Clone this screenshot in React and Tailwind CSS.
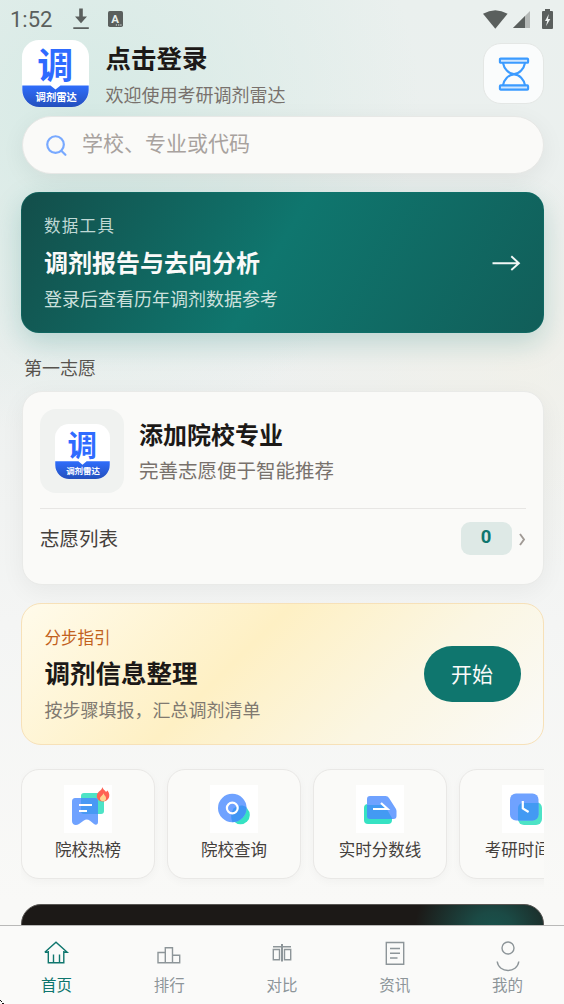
import React, { useState } from "react";

const tabs = [
  { key: "home", label: "首页", icon: HomeIcon },
  { key: "rank", label: "排行", icon: RankIcon },
  { key: "compare", label: "对比", icon: CompareIcon },
  { key: "news", label: "资讯", icon: NewsIcon },
  { key: "mine", label: "我的", icon: MineIcon },
];

const shortcuts = [
  { label: "院校热榜", icon: HotIcon },
  { label: "院校查询", icon: SearchSchoolIcon },
  { label: "实时分数线", icon: ScoreIcon },
  { label: "考研时间轴", icon: TimelineIcon },
];

const App = () => {
  const [activeTab, setActiveTab] = useState("home");
  const [keyword, setKeyword] = useState("");

  return (
    <div className="relative flex h-[1004px] w-[564px] flex-col overflow-hidden bg-[radial-gradient(ellipse_330px_330px_at_90px_110px,#d6eae5_0%,rgba(214,234,229,0)_100%),radial-gradient(ellipse_260px_200px_at_520px_370px,rgba(242,240,231,0.6)_0%,rgba(242,240,231,0)_100%),linear-gradient(180deg,#eaf0ee_0%,#edf0ef_35%,#f4f5f4_62%,#f9f9f7_90%)] font-['Noto_Sans_CJK_SC',sans-serif] text-[#1c1917]">
      <StatusBar />

      <main className="flex min-h-0 flex-1 flex-col overflow-hidden pr-[20px] pl-[21px]">
        <header className="flex h-[67px] shrink-0 items-center pl-px">
          <AppLogo className="size-[67px]" />
          <div className="ml-[16.5px] flex-1">
            <h1 className="text-[25.5px] leading-[36px] font-bold">点击登录</h1>
            <p className="mt-[6px] text-[18px] leading-[27px] text-[#78716c]">
              欢迎使用考研调剂雷达
            </p>
          </div>
          <button className="flex size-[61px] items-center justify-center rounded-[18px] border border-[#e4e7e5] bg-[#fafcfc]">
            <HourglassIcon />
          </button>
        </header>

        <label className="mt-[9px] ml-[0.5px] flex h-[58px] shrink-0 items-center rounded-full border border-[#e7e8e6] bg-[#fafaf8] pl-[23.5px] shadow-[0_6px_24px_rgba(28,25,23,0.06)]">
          <svg width="21" height="21" viewBox="0 0 22 22" fill="none" stroke="#78a9ff" strokeWidth="2.3">
            <circle cx="10" cy="10" r="8.7" />
            <path d="M16 16.5l4.3 4.2" strokeLinecap="round" />
          </svg>
          <input
            value={keyword}
            onChange={(e) => setKeyword(e.target.value)}
            placeholder="学校、专业或代码"
            className="ml-[15px] h-[52px] flex-1 bg-transparent pb-[6px] text-[21px] outline-none placeholder:text-[#a8a29e]"
          />
        </label>

        <section className="mt-[18px] flex h-[141px] shrink-0 items-center justify-between rounded-[18px] border border-[#0f766e]/40 bg-[linear-gradient(120deg,#134e4a_0%,#0f766e_48%,#115e59_100%)] bg-origin-border pr-[22px] pl-[22px] text-white shadow-[0_10px_28px_rgba(15,118,110,0.22)]">
          <div className="pb-px">
            <p className="text-[16.5px] leading-[25px] tracking-[1.3px] text-[#bfd8d5]">数据工具</p>
            <h2 className="mt-[6px] text-[24px] leading-[36px] font-bold text-[#fafaf9]">
              调剂报告与去向分析
            </h2>
            <p className="mt-[5px] text-[18px] leading-[27px] text-[#cce0dd]">登录后查看历年调剂数据参考</p>
          </div>
          <svg className="mt-px" width="29" height="16" viewBox="0 0 29 16" fill="none" stroke="#f1f7f6" strokeWidth="1.9">
            <path d="M0.5 8.3H27M19.3 1.3l7.6 7-7.6 6.7" />
          </svg>
        </section>

        <h3 className="mt-[20px] ml-[3px] shrink-0 text-[18px] leading-[28px] text-[#57534e]">
          第一志愿
        </h3>

        <section className="mt-[10px] ml-[0.5px] h-[194px] shrink-0 rounded-[20px] border border-[#e9eae8] bg-[#fafaf8] px-[17.5px] pt-[17px] shadow-[0_6px_24px_rgba(28,25,23,0.05)]">
          <div className="flex h-[100px] items-start border-b border-[#e7e6e4]">
            <div className="flex size-[84px] items-center justify-center rounded-[16px] bg-[#f0f2f0]">
              <AppLogo className="size-[55px]" />
            </div>
            <div className="ml-[15px] pt-[7px]">
              <h2 className="text-[24px] leading-[36px] font-bold">添加院校专业</h2>
              <p className="mt-[3px] text-[19.5px] leading-[29px] text-[#78716c]">
                完善志愿便于智能推荐
              </p>
            </div>
          </div>
          <div className="flex h-[58px] items-center">
            <span className="flex-1 pb-px text-[19.5px] leading-[29px] text-[#44403c]">志愿列表</span>
            <span className="flex h-[33px] w-[51px] items-center justify-center rounded-[9px] bg-[#dee9e6] font-['Roboto',sans-serif] text-[18.5px] font-bold text-[#0f766e]">
              0
            </span>
            <svg className="mt-[2px] ml-[7px]" width="7" height="13" viewBox="0 0 7 13" fill="none" stroke="#a09a95" strokeWidth="1.9">
              <path d="M1 1l4 5.5L1 12" />
            </svg>
          </div>
        </section>

        <section className="mt-[18px] flex h-[142px] shrink-0 items-center justify-between rounded-[20px] border border-[#f7e1b8] bg-[linear-gradient(135deg,#fffbeb_0%,#fef0c4_41%,#fbf6e2_70%,#fafaf8_100%)] bg-origin-border px-[22.5px]">
          <div className="pb-px">
            <p className="text-[16.5px] leading-[25px] text-[#c2611c]">分步指引</p>
            <h2 className="mt-[3px] text-[25.5px] leading-[37px] font-bold">调剂信息整理</h2>
            <p className="mt-[6px] text-[18px] leading-[27px] text-[#807970]">
              按步骤填报，汇总调剂清单
            </p>
          </div>
          <button className="h-[56px] w-[97px] rounded-full bg-[#0f766e] pb-[2px] text-[21px] leading-[54px] text-[#fafaf9]">
            开始
          </button>
        </section>

        <div className="mt-[24px] flex h-[110px] shrink-0 gap-[12px] overflow-x-clip">
          {shortcuts.map(({ label, icon: Icon }) => (
            <button
              key={label}
              className="flex w-[134px] shrink-0 flex-col items-center rounded-[18px] border border-[#e9e8e6] bg-[#fafaf8] pt-[15px] shadow-[0_3px_10px_rgba(28,25,23,0.03)]"
            >
              <span className="block size-[48px] bg-white">
                <Icon />
              </span>
              <span className="mt-[4px] text-[16.5px] leading-[25px] text-[#44403c]">{label}</span>
            </button>
          ))}
        </div>

        <section className="mt-[25px] h-[120px] shrink-0 rounded-[20px] border border-[#585653] bg-[#1c1917] bg-[radial-gradient(ellipse_78px_60px_at_471px_22px,#19514b_0%,#1b4a45_25%,rgba(28,25,23,0)_100%)]" />
      </main>

      <nav className="flex h-[79px] shrink-0 border-t border-[#b9b9b8] bg-[#fafaf9]">
        {tabs.map(({ key, label, icon: Icon }) => (
          <button
            key={key}
            onClick={() => setActiveTab(key)}
            className={`flex flex-1 flex-col items-center pt-[8px] ${
              activeTab === key ? "text-[#0f766e]" : "text-[#8d9599]"
            }`}
          >
            <Icon />
            <span className="text-[15.5px] leading-[24px]">{label}</span>
          </button>
        ))}
      </nav>

      <svg className="absolute bottom-0 left-0" width="4" height="4" viewBox="0 0 4 4" fill="#111">
        <path d="M0 0h1v1H0zM1 1h1v1H1zM2 3h2v1H2z" />
      </svg>
    </div>
  );
};

const StatusBar = () => (
  <div className="flex h-[40px] shrink-0 items-center pb-[2px] text-[#5a5f5d]">
    <span className="ml-[10px] w-[63px] pt-[2px] font-['Roboto',sans-serif] text-[22px] leading-[38px]">1:52</span>
    <svg width="17" height="22" viewBox="0 0 17 22" fill="currentColor">
      <path d="M6.2 .5h3.6v8h4.2L8 15.2 2 8.500h4.200zM.3 19.200h15.500V21H.3z" />
    </svg>
    <svg className="ml-[18px]" width="15" height="16" viewBox="0 0 15 16">
      <rect width="15" height="16" rx="1.8" fill="currentColor" />
      <text x="7" y="11.8" textAnchor="middle" fontSize="11.5" fontWeight="700" fontFamily="Roboto, sans-serif" fill="#e8f0ed">A</text>
      <path d="M7.8 13.6h1.2v1H7.8zM10.1 13.6h1.2v1h-1.2zM12.3 13.6h1.2v1h-1.2z" fill="#e8f0ed" />
    </svg>
    <div className="ml-auto flex items-center pr-[11px]">
      <svg width="25" height="19" viewBox="0 0 25 19" fill="currentColor">
        <path d="M0 3.8Q12.3-3.3 24.6 3.8L12.3 18.8z" />
      </svg>
      <svg className="ml-[4px]" width="19" height="18" viewBox="0 0 19 18">
        <path d="M18 1v17H1z" fill="#b4b8b6" />
        <path d="M13 6v12H1z" fill="currentColor" />
      </svg>
      <svg className="ml-[11px]" width="11" height="20" viewBox="0 0 11 20">
        <path d="M3 0h5v2h2a1 1 0 0 1 1 1v16a1 1 0 0 1-1 1H1a1 1 0 0 1-1-1V3a1 1 0 0 1 1-1h2z" fill="currentColor" />
        <path d="M6.8 5L3 12h2.2L4 17.3 8.3 10H6z" fill="#edf1ef" />
      </svg>
    </div>
  </div>
);

const AppLogo = ({ className }) => (
  <svg className={`shrink-0 overflow-visible ${className}`} viewBox="0 0 67 67">
    <defs>
      <linearGradient id="logoBlue" x1="0" y1="0" x2="0" y2="1">
        <stop offset="0" stopColor="#2f6dfb" />
        <stop offset="1" stopColor="#2450bd" />
      </linearGradient>
    </defs>
    <rect width="67" height="67" rx="17" fill="#fff" />
    <path d="M0.3 45.5h28.2l5 4 5-4h28.2V50a17 17 0 0 1-17 17H17.3a17 17 0 0 1-17-17z" fill="url(#logoBlue)" />
    <text x="33.2" y="38.7" textAnchor="middle" fontSize="36" fontWeight="700" fill="#2f6bff">
      调
    </text>
    <text x="34.2" y="61.3" textAnchor="middle" fontSize="10.3" fontWeight="700" fill="#fff">
      调剂雷达
    </text>
  </svg>
);

function HourglassIcon() {
  return (
    <svg width="32" height="34" viewBox="0 0 32 34" fill="none" stroke="#3b9bff" strokeWidth="2.1">
      <rect x="1.9" y="1.6" width="28.2" height="4.2" rx="0.8" fill="#cfe6ff" />
      <rect x="1.9" y="28.4" width="28.2" height="4.2" rx="0.8" fill="#cfe6ff" />
      <path d="M5 6c1 5.5 5.5 11 11 11S26 11.5 27 6M5 28.2c1-5.5 5.5-10.8 11-10.8s10 5.3 11 10.8" />
    </svg>
  );
}

function HotIcon() {
  return (
    <svg width="48" height="48" viewBox="0 0 48 48">
      <rect x="17" y="8" width="23" height="21" rx="3" fill="#4de3c6" />
      <path d="M11.5 13H31a3 3 0 0 1 3 3v21c0 2.5-2 3.500-4 2l-4-3.300c-2.500-1.600-4-1.600-6.500 0L15 39c-3 2-7 1-7-3V16a3 3 0 0 1 3.500-3z" fill="#6fa2ff" />
      <path d="M17 13h14a3 3 0 0 1 3 3v13H20a3 3 0 0 1-3-3z" fill="#4899f4" />
      <path d="M15 20h13M15 26h8" stroke="#fff" strokeWidth="2.2" />
      <path d="M38.5 2c.5 3 3 3.5 3.5 5l1.5-1.5c4 5 1 11-4.5 11-6.5 0-8-6.5-4-10C37 5 38 4 38.5 2z" fill="#ff6254" />
      <path d="M39.5 8c0 2 3 3 2.5 6-.5 3-6 3-6-.5 0-2 3-3 3.5-5.5z" fill="#ffd491" />
    </svg>
  );
}

function SearchSchoolIcon() {
  return (
    <svg width="48" height="48" viewBox="0 0 48 48">
      <circle cx="30.5" cy="30" r="9.3" fill="#36e2c3" />
      <circle cx="22.3" cy="23" r="14.3" fill="#6fa2ff" />
      <path d="M24 23.2C29 19.5 33 20 36.4 22A14.3 14.3 0 0 1 22.5 37.2C20.5 33 20.5 27 24 23.2z" fill="#4096f4" />
      <circle cx="22.3" cy="23" r="5.4" fill="none" stroke="#fff" strokeWidth="2.2" />
    </svg>
  );
}

function ScoreIcon() {
  return (
    <svg width="48" height="48" viewBox="0 0 48 48">
      <path d="M12 19h16l8 14v2a4 4 0 0 1-4 4H12a4 4 0 0 1-4-4V23a4 4 0 0 1 4-4z" fill="#36e2c3" />
      <path d="M14 11h15.5a4 4 0 0 1 3.5 2l6.7 10.5a5 5 0 0 1 .8 2.5V31a3 3 0 0 1-3 3H14a3 3 0 0 1-3-3V14a3 3 0 0 1 3-3z" fill="#6fa2ff" />
      <path d="M11 20h17.5l8 14H14a3 3 0 0 1-3-3z" fill="#439af3" />
      <path d="M17 24h14.5L25 18" fill="none" stroke="#fff" strokeWidth="2.2" />
    </svg>
  );
}

function TimelineIcon() {
  return (
    <svg width="48" height="48" viewBox="0 0 48 48">
      <rect x="16" y="17" width="24" height="23" rx="6" fill="#4de3c6" />
      <rect x="8" y="8.5" width="28.5" height="27" rx="6" fill="#6fa2ff" />
      <path d="M21 18h15.5v11.5a6 6 0 0 1-6 6H16V23a5 5 0 0 1 5-5z" fill="#439af3" />
      <path d="M20.8 16v7.5l5.8 3.5" fill="none" stroke="#fff" strokeWidth="2.2" />
    </svg>
  );
}

function TabIcon({ children }) {
  return (
    <svg width="38" height="38" viewBox="0 0 38 38" fill="none" stroke="currentColor" strokeWidth="1.4">
      {children}
    </svg>
  );
}

function HomeIcon() {
  return (
    <TabIcon>
      <path d="M11.3 17v11.8h15.5V17M7.8 18.2L19 8.3l11.2 9.9h-3.500M7.800 18.200h3.500M16.500 28.500v-8M22.500 28.500v-8" />
    </TabIcon>
  );
}

function RankIcon() {
  return (
    <TabIcon>
      <path d="M8 18.5h7.3v10.3H8zM15.3 13.7h7.2v15.1h-7.2zM22.5 21.2h7.2v7.6h-7.2z" />
    </TabIcon>
  );
}

function CompareIcon() {
  return (
    <TabIcon>
      <path d="M10 12.7h18M10.3 15.5h6.2v10.2h-6.2zM21.5 15.5h6.2v10.2h-6.2z" />
      <path d="M19 10v17.5" strokeWidth="2" />
    </TabIcon>
  );
}

function NewsIcon() {
  return (
    <TabIcon>
      <path d="M10.3 8.5h17.4v21.7H10.3zM14 14.5h10M14 19.2h10M14 24h7.5" />
    </TabIcon>
  );
}

function MineIcon() {
  return (
    <TabIcon>
      <circle cx="19" cy="14" r="6" />
      <path d="M8.2 27.500c1.500 12 20.100 12 21.600 0" />
    </TabIcon>
  );
}

export default App;
